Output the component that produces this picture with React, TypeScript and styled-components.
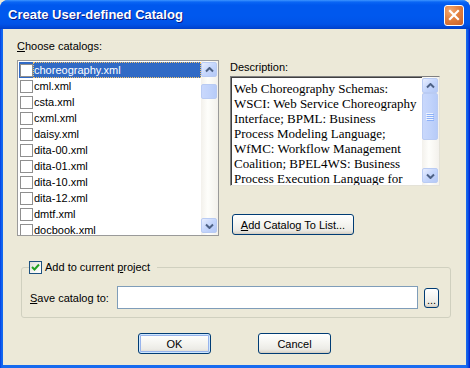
import styled, { createGlobalStyle } from "styled-components";

const GlobalStyle = createGlobalStyle`
  html, body {
    margin: 0;
    padding: 0;
    background: #ece9d8;
  }
  * {
    box-sizing: border-box;
  }
`;

const Window = styled.div`
  width: 470px;
  height: 368px;
  display: flex;
  flex-direction: column;
  background: linear-gradient(to right, #0831d9 0px, #0a5ef0 1px, #166aee 3px, #1a6cf0 466px, #0c55e4 468px, #0019cf 470px);
  border-radius: 8px 8px 0 0;
  overflow: hidden;
  font-family: "Liberation Sans", Arial, sans-serif;
  font-size: 11px;
  color: #000;
`;

const TitleBar = styled.div`
  height: 29px;
  flex: none;
  display: flex;
  align-items: center;
  justify-content: space-between;
  padding: 0 6px 0 8px;
  background: linear-gradient(
    to bottom,
    #3d95ff 0px,
    #0a66f5 2px,
    #0058ee 5px,
    #0058ee 16px,
    #0053e8 24px,
    #0048d8 27px,
    #003fc8 29px
  );
`;

const Title = styled.span`
  color: #fff;
  font-family: "Liberation Sans", Arial, sans-serif;
  font-weight: bold;
  font-size: 13px;
  text-shadow: 1px 1px 0 #0a1883;
`;

const CloseButton = styled.div`
  width: 20px;
  height: 21px;
  margin-top: 1px;
  border: 1px solid #fff;
  border-radius: 3px;
  background: radial-gradient(circle at 30% 25%, #f3a972 0%, #e2803f 45%, #c8602a 100%);
  display: flex;
  align-items: center;
  justify-content: center;
`;

const Body = styled.div`
  flex: 1;
  margin: 0 4px 3px 3px;
  background: #ece9d8;
  padding: 11px 0 0 14px;
  display: flex;
  flex-direction: column;
`;

const Columns = styled.div`
  display: flex;
`;

const LeftCol = styled.div`
  width: 202px;
  display: flex;
  flex-direction: column;
`;

const RightCol = styled.div`
  width: 210px;
  margin-left: 11px;
  padding-top: 21px;
  display: flex;
  flex-direction: column;
  align-items: flex-start;
`;

const Label = styled.div<{ $gap?: number }>`
  line-height: 13px;
  height: 13px;
  margin-bottom: ${(p) => p.$gap ?? 0}px;
  white-space: nowrap;
`;

const ListBox = styled.div`
  height: 176px;
  border: 1px solid #9a9a9a;
  background: #fff;
  display: flex;
  overflow: hidden;
`;

const Rows = styled.div`
  flex: 1;
  padding: 1px 0 0 1px;
  overflow: hidden;
`;

const Row = styled.div<{ $selected?: boolean }>`
  height: 16px;
  display: flex;
  align-items: center;
  padding-left: 1px;
  background: ${(p) => (p.$selected ? "#316ac5" : "transparent")};
  color: ${(p) => (p.$selected ? "#fff" : "#000")};
`;

const ListCheck = styled.span`
  width: 13px;
  height: 13px;
  flex: none;
  border: 1px solid #8f8f8f;
  background: #fff;
`;

const RowText = styled.span<{ $focus?: boolean }>`
  flex: 1;
  height: 16px;
  line-height: 14px;
  border: 1px ${(p) => (p.$focus ? "dotted #f4c46c" : "solid transparent")};
`;

const ScrollBar = styled.div`
  width: 17px;
  flex: none;
  display: flex;
  flex-direction: column;
  padding: 1px 1px 2px 0;
  background: linear-gradient(to right, #f3f1ec, #fefefb 40%, #f3f1ec);
`;

const ScrollButton = styled.div`
  height: 15px;
  flex: none;
  border: 1px solid #b9cbf3;
  border-radius: 2px;
  background: linear-gradient(135deg, #e8eefe 0%, #c5d6fc 50%, #b4c8f6 100%);
  display: flex;
  align-items: center;
  justify-content: center;
`;

const Thumb = styled.div<{ $top: number; $h: number }>`
  margin-top: ${(p) => p.$top}px;
  height: ${(p) => p.$h}px;
  flex: none;
  border: 1px solid #b9cbf3;
  border-radius: 2px;
  background: linear-gradient(to right, #c9d8fc 0%, #c1d3fb 50%, #b7cbf8 100%);
  display: flex;
  align-items: center;
  justify-content: center;
`;

const Spacer = styled.div`
  flex: 1;
`;

const DescBox = styled.div`
  width: 210px;
  height: 110px;
  margin-top: 2px;
  background: #fff;
  border: 1px solid;
  border-color: #808080 #e4e2d8 #e4e2d8 #808080;
  box-shadow: inset 1px 1px 0 #404040;
  display: flex;
  overflow: hidden;
`;

const DescText = styled.div`
  flex: 1;
  padding: 4px 0 0 3px;
  font-family: "Liberation Serif", "Times New Roman", serif;
  font-size: 13px;
  line-height: 15px;
  white-space: nowrap;
  overflow: hidden;
`;

const Button = styled.button<{ $w: number; $default?: boolean }>`
  width: ${(p) => p.$w}px;
  height: 21px;
  padding: 0;
  border: 1px solid #003c74;
  border-radius: 3px;
  background: linear-gradient(to bottom, #ffffff 0%, #f5f5f1 45%, #ecebe6 80%, #d8d2c6 100%);
  font-family: "Liberation Sans", Arial, sans-serif;
  font-size: 11px;
  color: #000;
  box-shadow: ${(p) =>
    p.$default ? "inset 0 0 0 1px #cee7ff, inset 0 0 0 2px #98b4ec" : "inset 0 -1px 0 #d6d0c5"};
`;

const AddButton = styled(Button)`
  margin: 28px 0 0 2px;
`;

const Group = styled.fieldset`
  margin: 25px 0 0 4px;
  width: 430px;
  padding: 12px 11px 8px 7px;
  border: 1px solid #d0d0bf;
  border-radius: 3px;
  min-width: 0;
`;

const Legend = styled.legend`
  padding: 0 7px 0 0;
  height: 13px;
  display: flex;
  align-items: center;
  line-height: 13px;
`;

const XpCheck = styled.span`
  width: 13px;
  height: 13px;
  margin-right: 3px;
  border: 1px solid #1c5180;
  background: linear-gradient(135deg, #dcdcd7 0%, #f6f6f3 60%, #ffffff 100%);
  display: flex;
  align-items: center;
  justify-content: center;
`;

const FieldRow = styled.div`
  display: flex;
  align-items: center;
  padding-left: 1px;
`;

const FieldLabel = styled.span`
  width: 87px;
  flex: none;
`;

const TextInput = styled.div`
  width: 302px;
  height: 23px;
  border: 1px solid #7f9db9;
  background: #fff;
`;

const BrowseButton = styled(Button)`
  margin-left: 6px;
  height: 20px;
  line-height: 10px;
  padding-top: 4px;
`;

const ButtonRow = styled.div`
  display: flex;
  justify-content: center;
  gap: 47px;
  margin: 15px 0 0 -14px;
`;

const Arrow = ({ down }: { down?: boolean }) => (
  <svg width="9" height="6" viewBox="0 0 9 6">
    <path
      d={down ? "M1 1.5 L4.5 5 L8 1.5" : "M1 4.5 L4.5 1 L8 4.5"}
      stroke="#4d6185"
      strokeWidth="2"
      fill="none"
    />
  </svg>
);

const Grip = () => (
  <svg width="8" height="8" viewBox="0 0 8 8">
    {[0, 2, 4, 6].map((y) => (
      <g key={y}>
        <rect x="0" y={y} width="7" height="1" fill="#eef4fe" />
        <rect x="1" y={y + 1} width="7" height="1" fill="#8cb0f8" />
      </g>
    ))}
  </svg>
);

const catalogs = [
  "choreography.xml",
  "cml.xml",
  "csta.xml",
  "cxml.xml",
  "daisy.xml",
  "dita-00.xml",
  "dita-01.xml",
  "dita-10.xml",
  "dita-12.xml",
  "dmtf.xml",
  "docbook.xml",
];

// wrapped the way the native edit control wraps it
const descLines = [
  "Web Choreography Schemas:",
  "WSCI: Web Service Choreography",
  "Interface; BPML: Business",
  "Process Modeling Language;",
  "WfMC: Workflow Management",
  "Coalition; BPEL4WS: Business",
  "Process Execution Language for",
];

export default function App() {
  return (
    <>
      <GlobalStyle />
      <Window>
        <TitleBar>
          <Title>Create User-defined Catalog</Title>
          <CloseButton>
            <svg width="12" height="12" viewBox="0 0 12 12">
              <path d="M2 2 L10 10 M10 2 L2 10" stroke="#fff" strokeWidth="2.2" strokeLinecap="square" />
            </svg>
          </CloseButton>
        </TitleBar>
        <Body>
          <Columns>
            <LeftCol>
              <Label $gap={7}>
                <u>C</u>hoose catalogs:
              </Label>
              <ListBox>
                <Rows>
                  {catalogs.map((name, i) => (
                    <Row key={name} $selected={i === 0}>
                      <ListCheck />
                      <RowText $focus={i === 0}>{name}</RowText>
                    </Row>
                  ))}
                </Rows>
                <ScrollBar>
                  <ScrollButton>
                    <Arrow />
                  </ScrollButton>
                  <Thumb $top={7} $h={15} />
                  <Spacer />
                  <ScrollButton>
                    <Arrow down />
                  </ScrollButton>
                </ScrollBar>
              </ListBox>
            </LeftCol>
            <RightCol>
              <Label>Description:</Label>
              <DescBox>
                <DescText>
                  {descLines.map((line) => (
                    <div key={line}>{line}</div>
                  ))}
                </DescText>
                <ScrollBar>
                  <ScrollButton>
                    <Arrow />
                  </ScrollButton>
                  <Thumb $top={0} $h={47}>
                    <Grip />
                  </Thumb>
                  <Spacer />
                  <ScrollButton>
                    <Arrow down />
                  </ScrollButton>
                </ScrollBar>
              </DescBox>
              <AddButton $w={122}>
                <u>A</u>dd Catalog To List...
              </AddButton>
            </RightCol>
          </Columns>
          <Group>
            <Legend>
              <XpCheck>
                <svg width="9" height="9" viewBox="0 0 9 9">
                  <path d="M1 4 L3.5 6.5 L8 1.5" stroke="#21a121" strokeWidth="2" fill="none" />
                </svg>
              </XpCheck>
              <span>
                Add to current <u>p</u>roject
              </span>
            </Legend>
            <FieldRow>
              <FieldLabel>
                <u>S</u>ave catalog to:
              </FieldLabel>
              <TextInput />
              <BrowseButton $w={15}>...</BrowseButton>
            </FieldRow>
          </Group>
          <ButtonRow>
            <Button $w={73} $default>
              OK
            </Button>
            <Button $w={73}>Cancel</Button>
          </ButtonRow>
        </Body>
      </Window>
    </>
  );
}
